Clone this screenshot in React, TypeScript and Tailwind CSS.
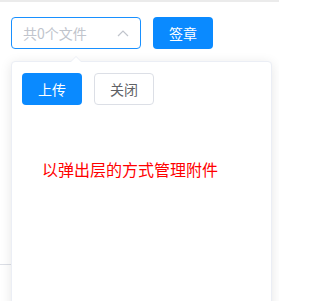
import React from "react";

export default function App() {
  const font = { fontFamily: '"Noto Sans CJK SC", "Noto Sans", sans-serif' };
  return (
    <div className="relative w-[279px] h-[301px] bg-white overflow-hidden" style={font}>
      <div className="h-[2px] bg-[#ebebeb]" />
      <div className="absolute left-0 top-[264px] w-[12px] h-px bg-[#dcdfe6]" />
      <div className="flex items-center gap-[12px] pl-[11px] pt-[15px]">
        <div className="w-[130px] h-[32px] border border-[#1890ff] rounded-[4px] flex items-center justify-between pl-[11px] pr-[11px]">
          <span className="text-[14px] text-[#c0c4cc] leading-none">共0个文件</span>
          <svg width="12" height="7" viewBox="0 0 12 7" className="mr-[0px]">
            <path d="M1 6 L6 1 L11 6" fill="none" stroke="#c0c4cc" strokeWidth="1.2" />
          </svg>
        </div>
        <div className="w-[60px] h-[32px] rounded-[4px] bg-[#0a8aff] text-white text-[14px] flex items-center justify-center">
          签章
        </div>
      </div>
      <div className="absolute left-[11px] top-[61px] w-[261px] h-[260px] bg-white border border-[#ebeef5] rounded-[4px] shadow-[0_2px_12px_0_rgba(0,0,0,0.1)] pl-[10px] pt-[11px]">
        <div className="absolute left-[58px] -top-[6px] w-0 h-0 border-l-[6px] border-r-[6px] border-b-[6px] border-l-transparent border-r-transparent border-b-[#ebeef5]" />
        <div className="absolute left-[59px] -top-[5px] w-0 h-0 border-l-[5px] border-r-[5px] border-b-[5px] border-l-transparent border-r-transparent border-b-white" />
        <div className="flex gap-[12px]">
          <div className="w-[60px] h-[32px] rounded-[4px] bg-[#0a8aff] text-white text-[14px] flex items-center justify-center">
            上传
          </div>
          <div className="w-[60px] h-[32px] rounded-[4px] bg-white border border-[#dcdfe6] text-[#606266] text-[14px] flex items-center justify-center">
            关闭
          </div>
        </div>
        <div className="mt-[52px] pl-[20px] text-[16px] leading-[24px] text-[#ff0000]">
          以弹出层的方式管理附件
        </div>
      </div>
    </div>
  );
}
